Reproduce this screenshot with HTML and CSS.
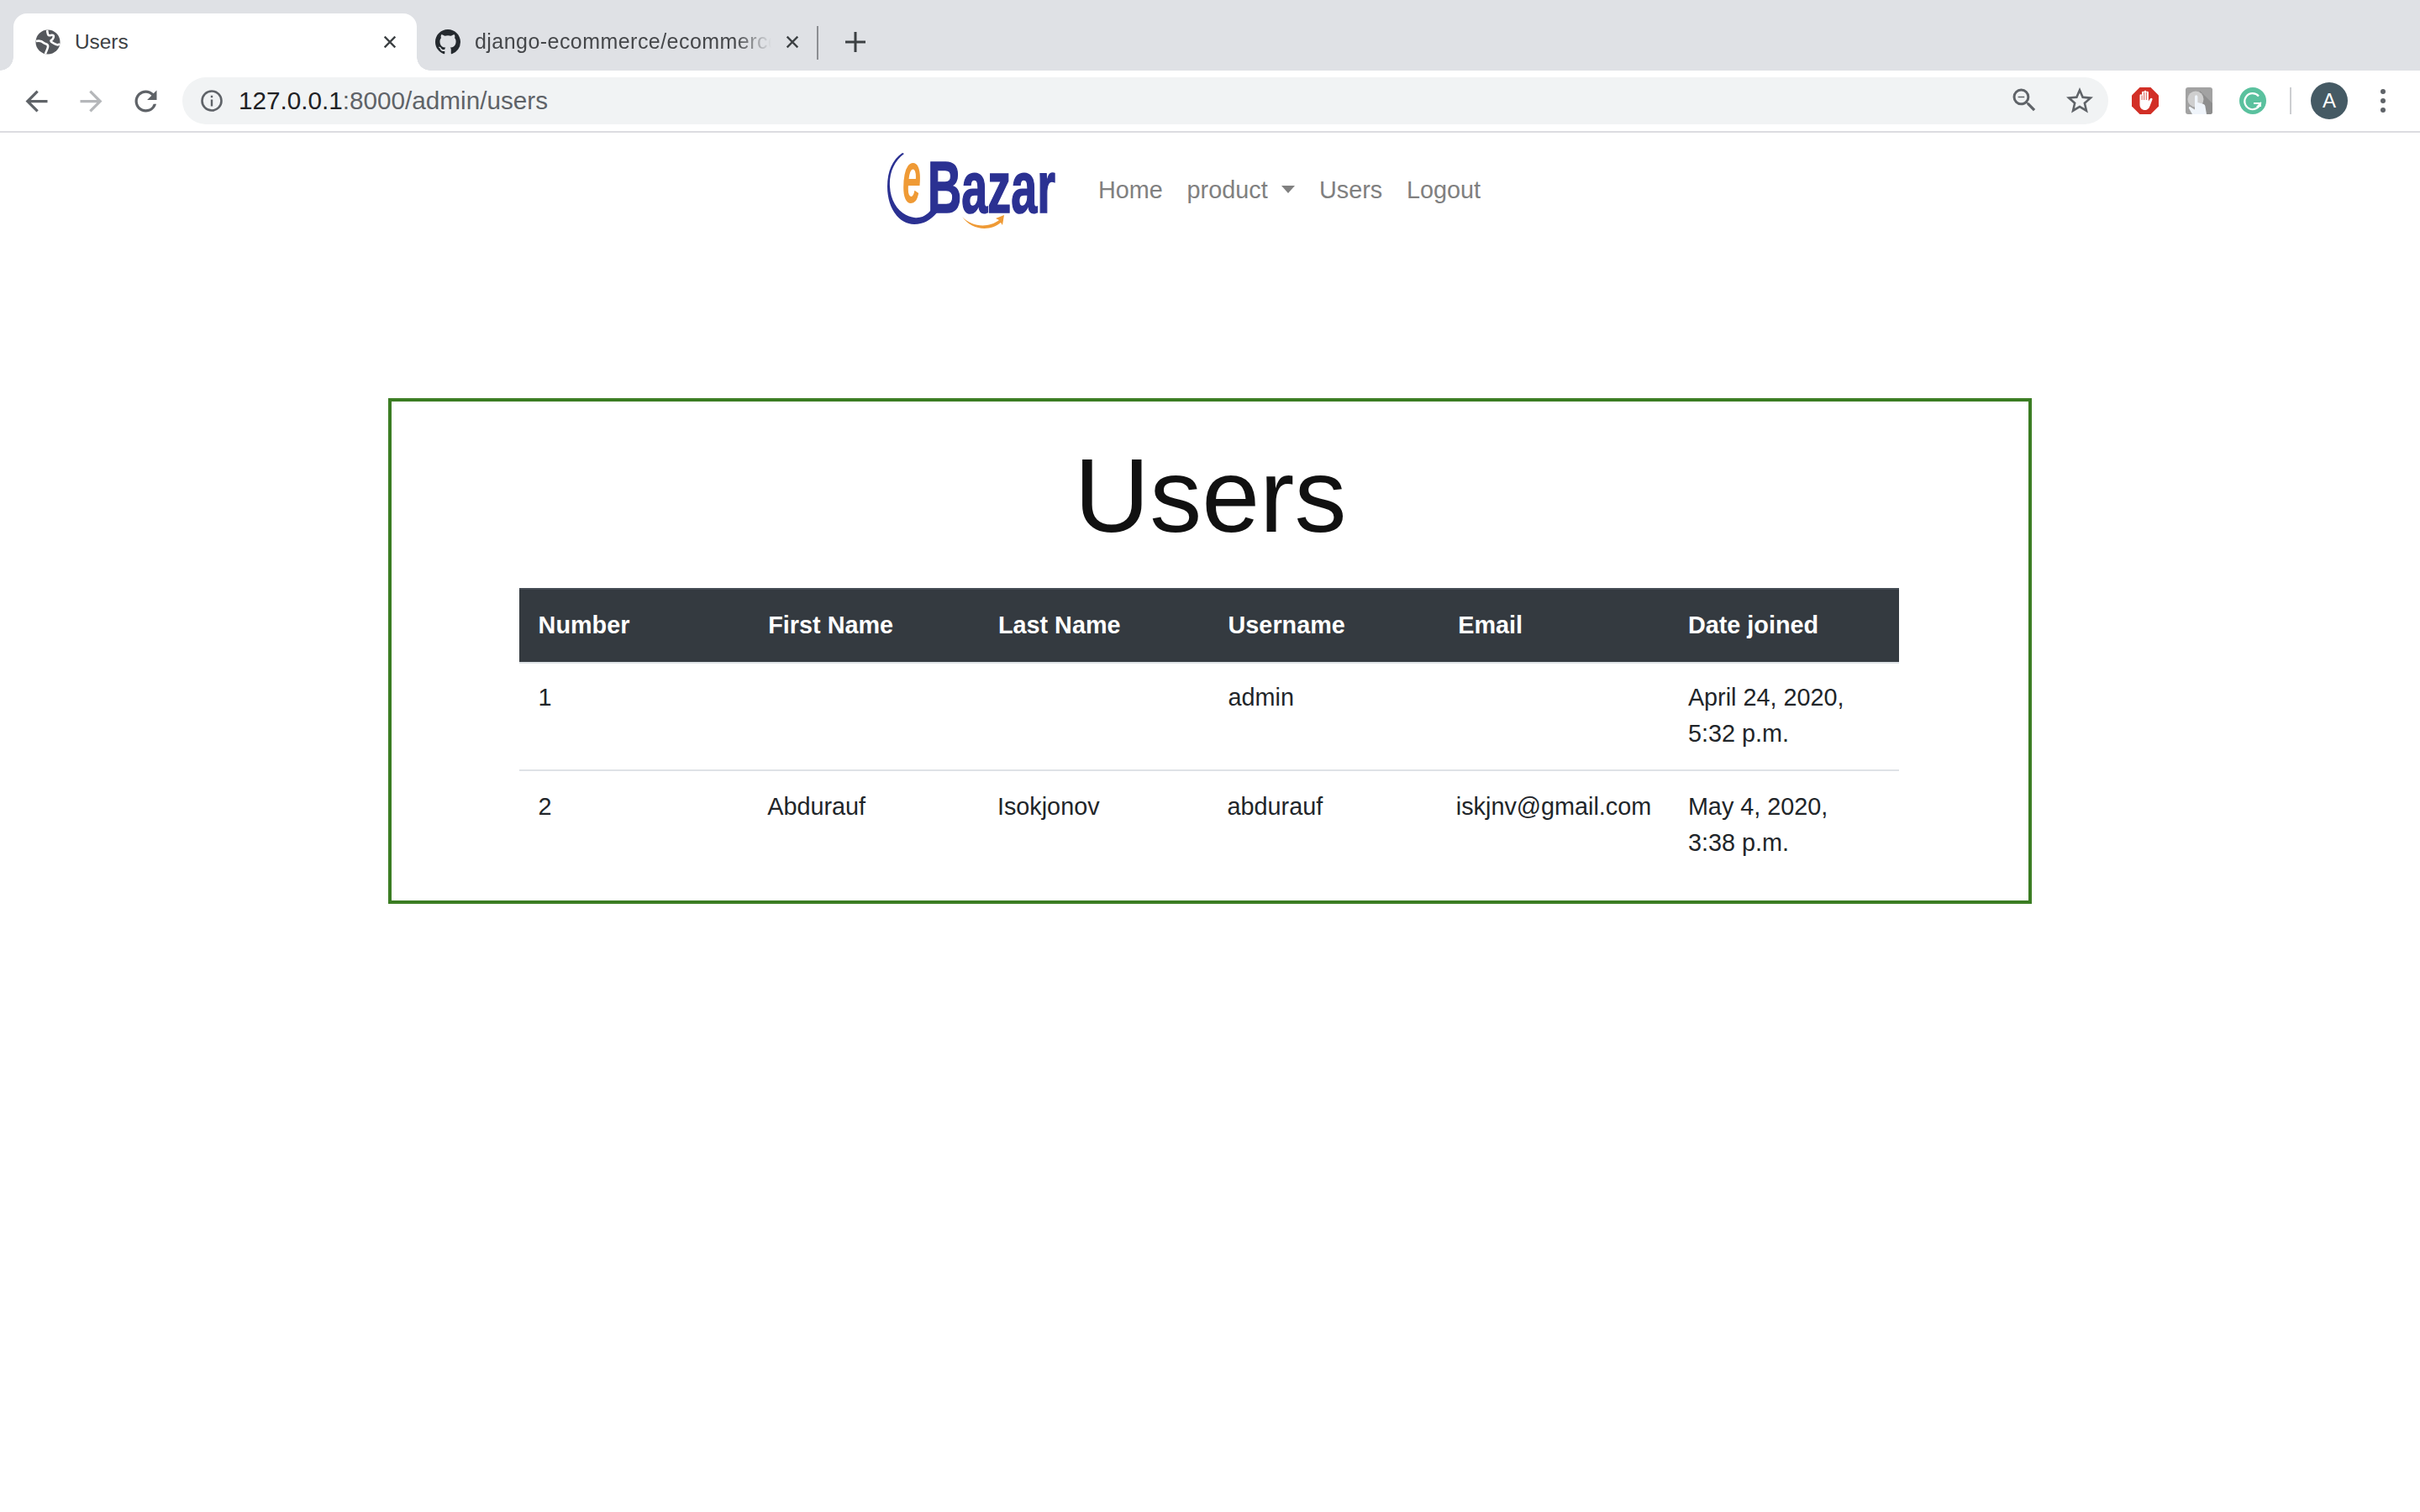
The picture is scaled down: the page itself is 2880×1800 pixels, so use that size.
FILE: index.html
```html
<!DOCTYPE html>
<html lang="en">
<head>
    <meta charset="UTF-8">
    <title>Users</title>
    <link rel="stylesheet" href="styles.css">
</head>
<body>
    <div class="tabstrip">
        <div class="tab active">
            <svg class="favicon" viewBox="0 0 30 30">
                <circle cx="15" cy="15" r="14.500" fill="#54575c"/>
                <path fill="none" stroke="#fff" stroke-width="2.600" d="M1 14c4-1 7 0 9 2s6 1 5 5-2 5-3 8"/>
                <path fill="none" stroke="#fff" stroke-width="2.600" d="M14 1c1 3 0 5 2 6s3-1 5 0 0 5-2 6 3 4 6 5 3 0 4-1"/>
            </svg>
            <span class="tab-title">Users</span>
            <svg class="tab-close" viewBox="0 0 20 20"><path d="M3 3l14 14M17 3L3 17"/></svg>
        </div>
        <div class="tab">
            <svg class="favicon" viewBox="0 0 16 16"><path fill="#24292e" d="M8 0C3.58 0 0 3.58 0 8c0 3.54 2.29 6.53 5.47 7.59.4.07.55-.17.55-.38 0-.19-.01-.82-.01-1.49-2.01.37-2.53-.49-2.69-.94-.09-.23-.48-.94-.82-1.13-.28-.15-.68-.52-.01-.53.63-.01 1.08.58 1.23.82.72 1.21 1.87.87 2.33.66.07-.52.28-.87.51-1.07-1.78-.2-3.64-.89-3.64-3.95 0-.87.31-1.59.82-2.15-.08-.2-.36-1.02.08-2.12 0 0 .67-.21 2.2.82.64-.18 1.32-.27 2-.27.68 0 1.36.09 2 .27 1.53-1.04 2.2-.82 2.2-.82.44 1.1.16 1.92.08 2.12.51.56.82 1.27.82 2.15 0 3.07-1.87 3.75-3.65 3.95.29.25.54.73.54 1.48 0 1.07-.01 1.93-.01 2.2 0 .21.15.46.55.38A8.013 8.013 0 0016 8c0-4.42-3.58-8-8-8z"/></svg>
            <span class="tab-title fade">django-ecommerce/ecommerce</span>
            <svg class="tab-close" viewBox="0 0 20 20"><path d="M3 3l14 14M17 3L3 17"/></svg>
        </div>
        <div class="tab-sep"></div>
        <svg class="new-tab" viewBox="0 0 26 26"><path d="M13 1v24M1 13h24"/></svg>
    </div>

    <div class="toolbar">
        <svg class="nav-btn" viewBox="0 0 24 24"><path fill="#5f6368" d="M20 11H7.83l5.59-5.59L12 4l-8 8 8 8 1.41-1.41L7.83 13H20v-2z"/></svg>
        <svg class="nav-btn" viewBox="0 0 24 24"><path fill="#b5b7ba" d="M12 4l-1.41 1.41L16.17 11H4v2h12.17l-5.58 5.59L12 20l8-8z"/></svg>
        <svg class="nav-btn" viewBox="0 0 24 24"><path fill="#5f6368" d="M17.65 6.35A7.958 7.958 0 0 0 12 4c-4.42 0-7.99 3.58-7.99 8s3.57 8 7.99 8c3.73 0 6.84-2.55 7.73-6h-2.08A5.99 5.99 0 0 1 12 18c-3.31 0-6-2.69-6-6s2.69-6 6-6c1.66 0 3.14.69 4.22 1.78L13 11h7V4l-2.35 2.35z"/></svg>
        <div class="omnibox">
            <svg class="info" viewBox="0 0 28 28"><circle cx="14" cy="14" r="11.5" fill="none" stroke="#5f6368" stroke-width="2.6"/><path fill="#5f6368" d="M12.8 12.5h2.4v8h-2.4zM12.8 7.8h2.4v2.4h-2.4z"/></svg>
            <span class="url"><span class="host">127.0.0.1</span>:8000/admin/users</span>
            <svg class="omni-icon" viewBox="2 2 21 21"><path fill="#5f6368" d="M15.5 14h-.79l-.28-.27A6.471 6.471 0 0 0 16 9.5 6.5 6.5 0 1 0 9.5 16c1.61 0 3.09-.59 4.23-1.57l.27.28v.79l5 4.99L20.49 19l-4.99-5zm-6 0C7.01 14 5 11.99 5 9.5S7.01 5 9.5 5 14 7.01 14 9.5 11.99 14 9.5 14zM7 9h5v1H7z"/></svg>
            <svg class="omni-icon" viewBox="2 2 20 20"><path fill="#5f6368" d="M22 9.24l-7.19-.62L12 2 9.19 8.63 2 9.24l5.46 4.73L5.82 21 12 17.27 18.18 21l-1.63-7.03L22 9.24zM12 15.4l-3.76 2.27 1-4.28-3.32-2.88 4.38-.38L12 6.1l1.71 4.04 4.38.38-3.32 2.88 1 4.28L12 15.4z"/></svg>
        </div>
        <div class="extensions">
            <svg class="ext" viewBox="0 0 32 32">
                <path fill="#d22f26" d="M9.5 0h13L32 9.5v13L22.5 32h-13L0 22.5v-13z"/>
                <path fill="#fff" d="M9.500 9.500a1.300 1.300 0 0 1 2.600 0V6a1.300 1.300 0 0 1 2.600 0V5a1.300 1.300 0 0 1 2.600 0v1a1.300 1.300 0 0 1 2.600 0v10.500l2-3c1.200-1.500 3.200-.5 2.500 1.200l-2.300 6c-1.200 3.800-3 6.300-6.200 6.300-4 0-6.400-2.500-6.400-6.500z"/>
                <path fill="none" stroke="#d22f26" stroke-width=".8" d="M12.100 9.500V15M14.700 6V15M17.300 6V15"/>
            </svg>
            <svg class="ext" viewBox="0 0 32 32">
                <rect width="32" height="32" rx="3" fill="#a2a2a2"/>
                <path fill="#8e8e8e" d="M17 4l15 15v10a3 3 0 0 1-3 3H14z"/>
                <circle cx="12" cy="14" r="9.500" fill="#cfcfcf"/>
                <path fill="#f0f5fb" d="M11 11a1.700 1.700 0 0 1 3.400 0v7l6 1.500c1.500.4 2.600 1.300 3 3L25 32H8l-4-7c-.6-1.500 1-2.500 2-1.500l5 3z"/>
            </svg>
            <svg class="ext" viewBox="0 0 32 32">
                <circle cx="16" cy="16" r="16" fill="#5ac19e"/>
                <path fill="none" stroke="#fff" stroke-width="2.200" d="M23 10.500A9.500 9.500 0 1 0 25 19h-8"/>
                <path fill="#fff" d="M20 23h6v-6z"/>
            </svg>
            <div class="ext-sep"></div>
            <div class="avatar">A</div>
            <svg class="menu" viewBox="0 0 8 32"><circle cx="4" cy="5" r="3"/><circle cx="4" cy="16" r="3"/><circle cx="4" cy="27" r="3"/></svg>
        </div>
    </div>

    <nav class="navbar">
        <svg class="logo" viewBox="0 0 201 90">
            <path fill="#2b3192" d="M18 0C6 8 0 22 0 40c0 26 14 45 32 45 12 0 21-6 28-15l-8-2c-6 7-12 10-20 9C16 75 4 60 3 40 2 24 8 10 20 1z"/>
            <text class="logo-e" transform="translate(18 59) scale(.9 2)">e</text>
            <text class="logo-name" transform="translate(48 71) scale(.9 1.4)">Bazar</text>
            <path fill="#ef9a35" d="M89 76c11 12 31 14 44 4l-4-2 10-4-2 12-2-3c-13 11-35 9-46-7z"/>
        </svg>
        <ul class="nav-links">
            <li>Home</li>
            <li>product <span class="caret"></span></li>
            <li>Users</li>
            <li>Logout</li>
        </ul>
    </nav>

    <div class="users-box">
        <h1>Users</h1>
        <table>
            <thead>
                <tr>
                    <th>Number</th>
                    <th>First Name</th>
                    <th>Last Name</th>
                    <th>Username</th>
                    <th>Email</th>
                    <th>Date joined</th>
                </tr>
            </thead>
            <tbody>
                <tr>
                    <td>1</td>
                    <td></td>
                    <td></td>
                    <td>admin</td>
                    <td></td>
                    <td>April 24, 2020,<br>5:32 p.m.</td>
                </tr>
                <tr>
                    <td>2</td>
                    <td class="mid">Abdurauf</td>
                    <td class="mid">Isokjonov</td>
                    <td class="mid">abdurauf</td>
                    <td class="mid email">iskjnv@gmail.com</td>
                    <td>May 4, 2020,<br>3:38 p.m.</td>
                </tr>
            </tbody>
        </table>
    </div>
</body>
</html>
```

FILE: styles.css
```css
*{
    padding: 0;
    margin: 0;
    box-sizing: border-box;
}
ul{
    list-style: none;
}
body{
    background: #fff;
    color: #212529;
    font-family: "Liberation Sans", Arial, sans-serif;
    font-size: 28.8px;
    line-height: 1.5;
}

/* browser tabs */
.tabstrip{
    height: 84px;
    padding: 16px 0 0 16px;
    background: #dfe1e5;
    display: flex;
}
.tab{
    width: 480px;
    height: 68px;
    padding: 0 22px 0 26px;
    display: flex;
    align-items: center;
    font-size: 24.4px;
    color: #45474a;
}
.tab.active{
    position: relative;
    padding-right: 23px;
    background: #fff;
    border-radius: 16px 16px 0 0;
    color: #3c4043;
}
.tab.active::before,
.tab.active::after{
    content: "";
    position: absolute;
    bottom: 0;
    width: 16px;
    height: 16px;
    background: radial-gradient(circle at 0 0, #dfe1e5 15.5px, #fff 16px);
}
.tab.active::before{
    left: -16px;
}
.tab.active::after{
    right: -16px;
    background: radial-gradient(circle at 100% 0, #dfe1e5 15.5px, #fff 16px);
}
.tab + .tab{
    width: 478px;
    padding: 0 22px 0 22px;
    font-size: 25px;
    letter-spacing: .45px;
}
.favicon{
    width: 30px;
    height: 30px;
    flex: none;
    margin-right: 17px;
}
.tab-title{
    flex: 1;
    white-space: nowrap;
    overflow: hidden;
}
.tab-title.fade{
    -webkit-mask-image: linear-gradient(to right, #000 88%, transparent 100%);
    mask-image: linear-gradient(to right, #000 88%, transparent 100%);
}
.tab-close{
    width: 18px;
    height: 18px;
    flex: none;
    margin-left: 16px;
    fill: none;
    stroke: #3c4043;
    stroke-width: 2.6;
}
.tab-sep{
    width: 2px;
    height: 40px;
    margin: 15px 0 0 -2px;
    background: #8c8e92;
}
.new-tab{
    width: 26px;
    height: 26px;
    margin: 21px 0 0 31px;
    fill: none;
    stroke: #3c4043;
    stroke-width: 3;
}

/* browser toolbar */
.toolbar{
    height: 74px;
    padding: 8px 0 8px 11px;
    display: flex;
    align-items: center;
    border-bottom: 2px solid #dcdce0;
}
.nav-btn{
    width: 65px;
    height: 39px;
    flex: none;
}
.omnibox{
    flex: 1;
    height: 56px;
    margin-left: 11px;
    padding: 0 18px 0 21px;
    display: flex;
    align-items: center;
    gap: 33px;
    background: #f1f3f4;
    border-radius: 28px;
}
.info{
    width: 28px;
    height: 28px;
    flex: none;
    margin-right: -15px;
}
.url{
    flex: 1;
    font-size: 29.7px;
    color: #5f6368;
    line-height: 1;
}
.host{
    color: #202124;
}
.omni-icon{
    width: 32px;
    height: 32px;
    flex: none;
}
.extensions{
    margin-left: 28px;
    padding-right: 40px;
    display: flex;
    align-items: center;
    gap: 32px;
}
.ext{
    width: 32px;
    height: 32px;
    flex: none;
}
.ext-sep{
    width: 2px;
    height: 32px;
    margin-left: -4px;
    background: #ccced1;
}
.avatar{
    width: 44px;
    height: 44px;
    margin-left: -9px;
    border-radius: 50%;
    background: #455a64;
    color: #fff;
    font-size: 24px;
    line-height: 44px;
    text-align: center;
}
.menu{
    width: 8px;
    height: 32px;
    margin-left: 6px;
    fill: #5f6368;
}

/* site navbar */
.navbar{
    height: 132px;
    padding: 24px 48px 0 0;
    display: flex;
    justify-content: center;
    align-items: flex-start;
}
.logo{
    width: 201px;
    height: 90px;
    margin-right: 36px;
    overflow: visible;
}
.logo-e{
    font-family: "Liberation Sans", sans-serif;
    font-size: 44px;
    font-weight: 700;
    font-style: italic;
    fill: #ef9a35;
}
.logo-name{
    font-family: "Liberation Sans", sans-serif;
    font-size: 62px;
    font-weight: 700;
    fill: #2b3192;
    stroke: #2b3192;
    stroke-width: 1.2;
}
.nav-links{
    display: flex;
    padding-top: 23px;
    color: #808080;
}
.nav-links li{
    padding: 0 14.4px;
}
.caret{
    display: inline-block;
    margin-left: 8.5px;
    vertical-align: 6px;
    border-top: 9px solid #808080;
    border-left: 8.6px solid transparent;
    border-right: 8.6px solid transparent;
}

/* users card */
.users-box{
    width: 1956px;
    height: 602px;
    margin: 184px auto 0;
    padding: 0 154px 0 152px;
    border: 4px solid #3b7d23;
}
h1{
    font-size: 124px;
    font-weight: 400;
    line-height: 1.2;
    text-align: center;
    color: #111;
    padding: 38px 0 0 3px;
    margin-bottom: 35px;
}
table{
    width: 100%;
    table-layout: fixed;
    border-collapse: collapse;
}
th, td{
    padding: 18.6px 21.6px 20.6px 22.6px;
    text-align: left;
    vertical-align: top;
}
th{
    padding: 21.6px 21.6px 21.6px 22.6px;
    background: #343a40;
    color: #fff;
    font-weight: 700;
    border-top: 2px solid #454d55;
    border-bottom: 2px solid #dee2e6;
}
tbody tr + tr td{
    padding-top: 21.6px;
    line-height: 42.6px;
    border-top: 2px solid #dee2e6;
}
td.mid{
    padding-left: 21.6px;
}
td.email{
    padding-left: 20.2px;
}
```
